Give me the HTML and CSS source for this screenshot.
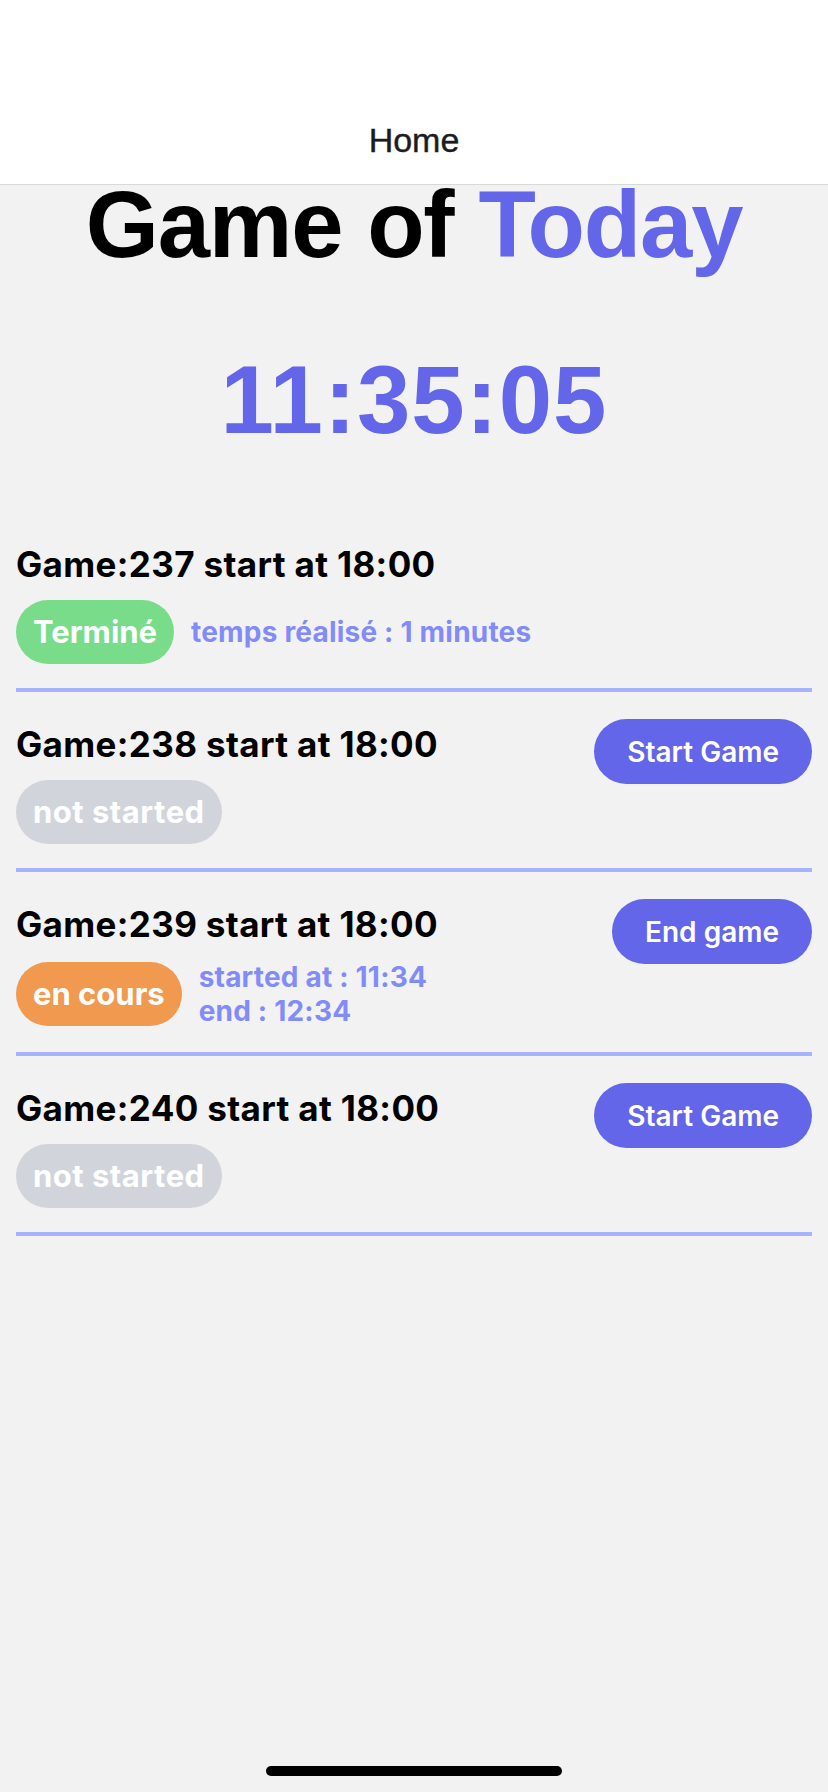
FILE: index.html
```html
<!DOCTYPE html>
<html lang="fr">
<head>
<meta charset="utf-8">
<title>Home</title>
<link rel="stylesheet" href="styles.css">
</head>
<body>
<div class="screen">
  <header class="navbar">
    <span class="nav-title">Home</span>
  </header>
  <main class="content">
    <h1 class="title">Game of <span class="accent">Today</span></h1>
    <div class="clock">11:35:05</div>
    <ul class="games">
      <li class="game">
        <div class="info">
          <div class="game-name">Game:237 start at 18:00</div>
          <div class="status-row">
            <span class="badge badge-done">Terminé</span>
            <div class="meta"><span>temps réalisé : 1 minutes</span></div>
          </div>
        </div>
      </li>
      <li class="game">
        <div class="info">
          <div class="game-name">Game:238 start at 18:00</div>
          <div class="status-row">
            <span class="badge badge-idle">not started</span>
          </div>
        </div>
        <button class="action">Start Game</button>
      </li>
      <li class="game">
        <div class="info">
          <div class="game-name">Game:239 start at 18:00</div>
          <div class="status-row">
            <span class="badge badge-live">en cours</span>
            <div class="meta"><span>started at : 11:34</span><span>end : 12:34</span></div>
          </div>
        </div>
        <button class="action">End game</button>
      </li>
      <li class="game">
        <div class="info">
          <div class="game-name">Game:240 start at 18:00</div>
          <div class="status-row">
            <span class="badge badge-idle">not started</span>
          </div>
        </div>
        <button class="action">Start Game</button>
      </li>
    </ul>
  </main>
  <div class="home-indicator"></div>
</div>
</body>
</html>
```

FILE: styles.css
```css
* { box-sizing: border-box; }

html, body {
  margin: 0;
  padding: 0;
  background: #f2f2f2;
}

.screen {
  position: relative;
  width: 828px;
  min-height: 1792px;
  background: #f2f2f2;
}

.navbar {
  height: 185px;
  background: #ffffff;
  border-bottom: 1px solid #d9d9d9;
  display: flex;
  align-items: flex-end;
  justify-content: center;
  padding-bottom: 24px;
}

.nav-title {
  font-family: "Liberation Sans", Arial, sans-serif;
  font-size: 34px;
  font-weight: 400;
  color: #1c1c1e;
  line-height: 39px;
  -webkit-text-stroke: 0.4px #1c1c1e;
}

.content {
  display: flex;
  flex-direction: column;
  align-items: stretch;
}

.title {
  margin: 0;
  text-align: center;
  font-family: "Liberation Sans", Arial, sans-serif;
  font-weight: 700;
  font-size: 94px;
  letter-spacing: -1.2px;
  line-height: 80px;
  color: #000000;
}

.accent { color: #6366e9; }

.clock {
  margin-top: 80px;
  text-align: center;
  font-family: "Liberation Sans", Arial, sans-serif;
  font-weight: 700;
  font-size: 96px;
  letter-spacing: 1px;
  line-height: 110px;
  color: #6366e9;
}

.games {
  list-style: none;
  margin: 57px 0 0;
  padding: 0 16px;
}

.game {
  display: flex;
  justify-content: space-between;
  align-items: flex-start;
  padding: 27px 0 24px;
  border-bottom: 4px solid #a5b4fc;
}

.info {
  padding-top: 5px;
  display: flex;
  flex-direction: column;
  gap: 15px;
}

.game-name {
  font-family: Inter, "Noto Sans", sans-serif;
  font-weight: 700;
  font-size: 35px;
  line-height: 41px;
  letter-spacing: 0.35px;
  color: #000000;
}

.status-row {
  display: flex;
  align-items: center;
  gap: 17px;
}

.badge {
  height: 64px;
  line-height: 64px;
  padding: 0 17px;
  border-radius: 32px;
  font-family: Inter, "Noto Sans", sans-serif;
  font-weight: 700;
  font-size: 31px;
  color: #ffffff;
  white-space: nowrap;
}

.badge-done { background: #79dc8b; }
.badge-idle { background: #d1d5db; letter-spacing: 0.5px; }
.badge-live { background: #f0994f; }

.meta {
  display: flex;
  flex-direction: column;
  font-family: Inter, "Noto Sans", sans-serif;
  font-weight: 700;
  font-size: 28px;
  line-height: 34px;
  letter-spacing: 0.2px;
  color: #818cf8;
}

.action {
  height: 65px;
  padding: 0 33px;
  border: none;
  border-radius: 33px;
  background: #6366e9;
  color: #ffffff;
  font-family: Inter, "Noto Sans", sans-serif;
  font-weight: 600;
  font-size: 28px;
  cursor: pointer;
}

.home-indicator {
  position: absolute;
  left: 266px;
  bottom: 16px;
  width: 296px;
  height: 10px;
  border-radius: 5px;
  background: #000000;
}
```
